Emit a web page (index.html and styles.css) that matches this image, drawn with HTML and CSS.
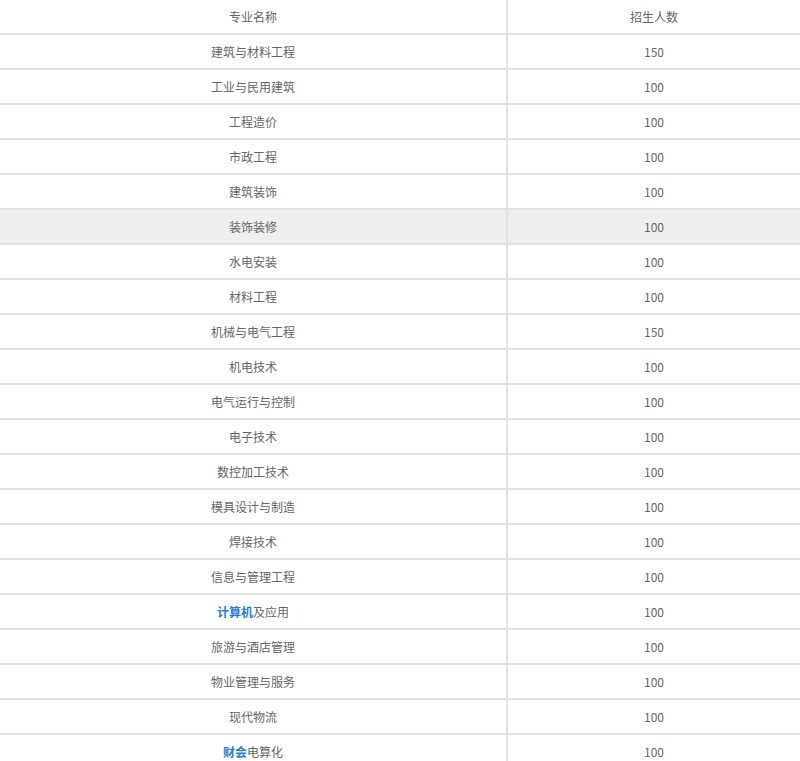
FILE: index.html
```html
<!DOCTYPE html>
<html lang="zh-CN">
<head>
<meta charset="utf-8">
<title>招生专业</title>
<link rel="stylesheet" href="styles.css">
</head>
<body>
<table class="majors">
  <thead>
    <tr><th class="name">专业名称</th><th class="num">招生人数</th></tr>
  </thead>
  <tbody>
    <tr><td class="name">建筑与材料工程</td><td class="num">150</td></tr>
    <tr><td class="name">工业与民用建筑</td><td class="num">100</td></tr>
    <tr><td class="name">工程造价</td><td class="num">100</td></tr>
    <tr><td class="name">市政工程</td><td class="num">100</td></tr>
    <tr><td class="name">建筑装饰</td><td class="num">100</td></tr>
    <tr class="hover"><td class="name">装饰装修</td><td class="num">100</td></tr>
    <tr><td class="name">水电安装</td><td class="num">100</td></tr>
    <tr><td class="name">材料工程</td><td class="num">100</td></tr>
    <tr><td class="name">机械与电气工程</td><td class="num">150</td></tr>
    <tr><td class="name">机电技术</td><td class="num">100</td></tr>
    <tr><td class="name">电气运行与控制</td><td class="num">100</td></tr>
    <tr><td class="name">电子技术</td><td class="num">100</td></tr>
    <tr><td class="name">数控加工技术</td><td class="num">100</td></tr>
    <tr><td class="name">模具设计与制造</td><td class="num">100</td></tr>
    <tr><td class="name">焊接技术</td><td class="num">100</td></tr>
    <tr><td class="name">信息与管理工程</td><td class="num">100</td></tr>
    <tr><td class="name"><a class="kw" href="#">计算机</a>及应用</td><td class="num">100</td></tr>
    <tr><td class="name">旅游与酒店管理</td><td class="num">100</td></tr>
    <tr><td class="name">物业管理与服务</td><td class="num">100</td></tr>
    <tr><td class="name">现代物流</td><td class="num">100</td></tr>
    <tr><td class="name"><a class="kw" href="#">财会</a>电算化</td><td class="num">100</td></tr>
  </tbody>
</table>
</body>
</html>
```
FILE: styles.css
```css
html, body {
  margin: 0;
  padding: 0;
  background: #ffffff;
}

body {
  font-family: "Noto Sans CJK SC", "Liberation Sans", sans-serif;
  font-size: 12px;
  color: #666666;
}

.majors {
  width: 800px;
  border-collapse: separate;
  border-spacing: 0;
  table-layout: fixed;
}

.majors th,
.majors td {
  padding: 0;
  height: 33px;
  line-height: 32px;
  text-align: center;
  font-weight: normal;
  border-bottom: 2px solid #e2e2e2;
}

.majors .name {
  width: 506px;
  border-right: 2px solid #e2e2e2;
}

.majors .num {
  width: auto;
}

.majors tr.hover td {
  background: #efefef;
}

.kw {
  color: #2b7bd3;
  font-weight: bold;
  text-decoration: none;
}
```
